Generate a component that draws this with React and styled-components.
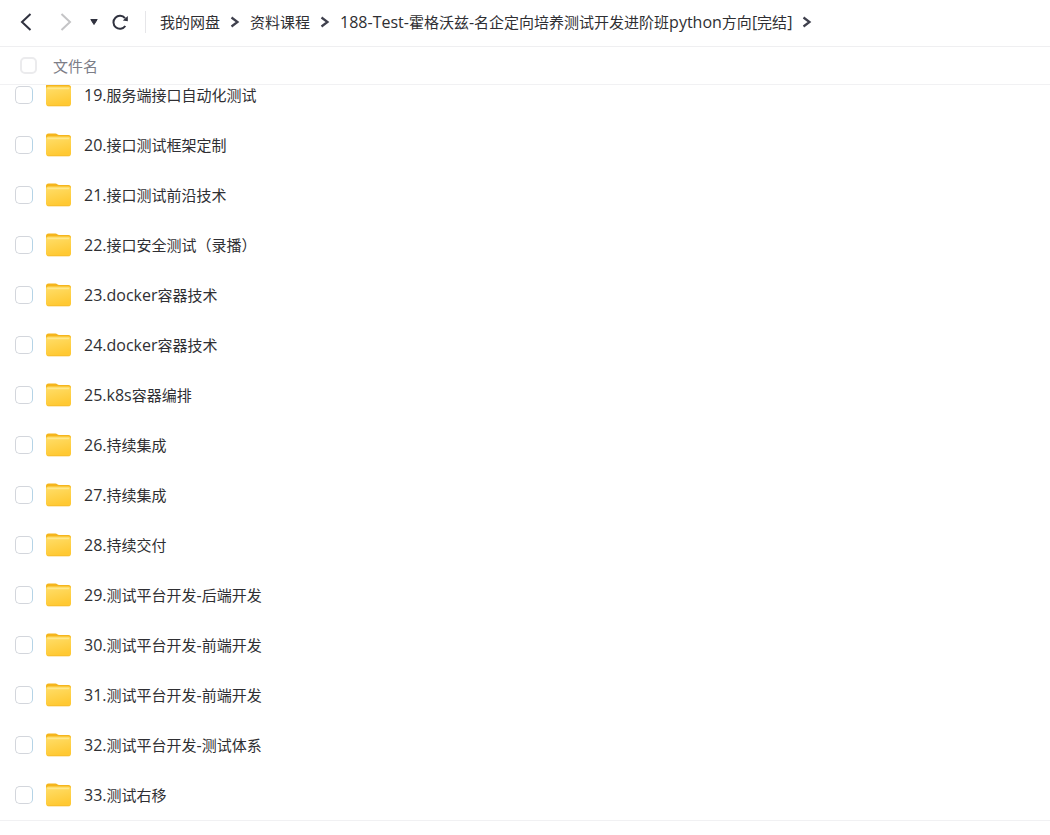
import React from "react";
import styled, { createGlobalStyle } from "styled-components";

const GlobalStyle = createGlobalStyle`
  * {
    box-sizing: border-box;
  }

  body {
    margin: 0;
    background: #fff;
    color: #2f2f33;
    font-family: "Open Sans", "Noto Sans CJK SC", sans-serif;
    font-size: 15px;
    line-height: 20px;
  }
`;

const Page = styled.div`
  display: flex;
  flex-direction: column;
  height: 100vh;
`;

const Toolbar = styled.header`
  display: flex;
  align-items: center;
  flex-shrink: 0;
  height: 47px;
  padding: 0 16px 2px;
  border-bottom: 1px solid #efeff1;
`;

const IconButton = styled.button`
  display: flex;
  align-items: center;
  justify-content: center;
  width: ${({ $width }) => $width || 20}px;
  height: 24px;
  margin-right: ${({ $gap }) => $gap || 0}px;
  padding: 0;
  border: 0;
  background: none;
  color: ${({ disabled }) => (disabled ? "#c4c4c6" : "#30323f")};
`;

const Divider = styled.div`
  width: 1px;
  height: 22px;
  margin-right: 14px;
  background: #e6e6e9;
`;

const Breadcrumb = styled.nav`
  display: flex;
  align-items: center;
  white-space: nowrap;

  a {
    color: inherit;
    text-decoration: none;
  }

  svg {
    margin: 0 10px;
  }
`;

const Latin = styled.span`
  font-size: 16px;
`;

const ColumnHeader = styled.div`
  display: flex;
  align-items: center;
  flex-shrink: 0;
  gap: 16px;
  height: 38px;
  padding: 0 20px;
  border-bottom: 1px solid #f1f1f3;
  color: #7c7d87;
`;

const Checkbox = styled.input.attrs({ type: "checkbox" })`
  appearance: none;
  flex-shrink: 0;
  width: ${({ $small }) => ($small ? 17 : 18)}px;
  height: ${({ $small }) => ($small ? 17 : 18)}px;
  margin: 0;
  border: ${({ $small }) => ($small ? "2px solid #ebebed" : "1px solid #d3d6dc")};
  border-right-color: ${({ $small }) => ($small ? "#ebebed" : "#b4d3e6")};
  border-radius: 5px;
  background: #fff;

  &:checked {
    background: #06a7ff;
  }
`;

/* The list rests at its last row, the first one runs under the column header */
const List = styled.ul`
  display: flex;
  flex: 1;
  flex-direction: column;
  justify-content: flex-end;
  min-height: 0;
  margin: 0;
  padding: 0;
  overflow: hidden;
  list-style: none;
`;

const Row = styled.li`
  display: flex;
  align-items: center;
  flex-shrink: 0;
  height: 50px;
  padding: 0 15px;

  label {
    display: flex;
    align-items: center;
  }

  svg {
    margin: 0 12px;
  }
`;

const Footer = styled.footer`
  flex-shrink: 0;
  height: 15px;
  border-top: 1px solid #f1f1f3;
`;

const folders = [
  "19.服务端接口自动化测试",
  "20.接口测试框架定制",
  "21.接口测试前沿技术",
  "22.接口安全测试（录播）",
  "23.docker容器技术",
  "24.docker容器技术",
  "25.k8s容器编排",
  "26.持续集成",
  "27.持续集成",
  "28.持续交付",
  "29.测试平台开发-后端开发",
  "30.测试平台开发-前端开发",
  "31.测试平台开发-前端开发",
  "32.测试平台开发-测试体系",
  "33.测试右移",
];

const path = [
  "我的网盘",
  "资料课程",
  "188-Test-霍格沃兹-名企定向培养测试开发进阶班python方向[完结]",
];

const MixedText = ({ text }) => (
  <span>
    {text
      .split(/([\x21-\x7e]+)/)
      .map((part, i) => (i % 2 ? <Latin key={i}>{part}</Latin> : part))}
  </span>
);

const Arrow = ({ back }) => (
  <svg width="12" height="20" viewBox="0 0 12 20" fill="none" aria-hidden="true">
    <path
      d={back ? "M10.5 2 2 10l8.500 8" : "M1.500 2 10 10l-8.500 8"}
      stroke="currentColor"
      strokeWidth="2"
    />
  </svg>
);

const Separator = () => (
  <svg width="10" height="12" viewBox="0 0 10 12" fill="none" aria-hidden="true">
    <path d="M1.500 1.500 7.500 6l-6 4.500" stroke="#3f404d" strokeWidth="2.200" />
  </svg>
);

const FolderIcon = () => (
  <svg width="27" height="26" viewBox="0 0 27 26" aria-hidden="true">
    <defs>
      <linearGradient id="front" x1="0" y1="0" x2="0.300" y2="1">
        <stop offset="0" stopColor="#ffdf6c" />
        <stop offset="1" stopColor="#ffc933" />
      </linearGradient>
    </defs>
    <path
      d="M1 4a2.500 2.500 0 0 1 2.500-2.500h7c1.500 0 2 1.500 3.500 1.500h9.500A2.500 2.500 0 0 1 26 5.500V12H1z"
      fill="#f5b51c"
    />
    <path d="M1 7.500Q1 4.500 3.500 4.500h20Q26 4.500 26 7.500v14q0 2.500-2.500 2.500h-20Q1 24 1 21.500z" fill="url(#front)" />
    <path d="M3 6.500h20.500" stroke="#ffe78c" strokeWidth="1.500" strokeLinecap="round" />
    <path d="M2 23.300q.6.500 1.500.500h20q1 0 1.600-.5" stroke="#f7bd2c" fill="none" />
  </svg>
);

const App = () => {
  return (
    <Page>
      <GlobalStyle />
      <Toolbar>
        <IconButton aria-label="后退" $gap={20}>
          <Arrow back />
        </IconButton>
        <IconButton aria-label="前进" $gap={10} disabled>
          <Arrow />
        </IconButton>
        <IconButton aria-label="历史" $width={16} $gap={8}>
          <svg width="8" height="8" viewBox="0 0 8 8" aria-hidden="true">
            <path d="M.8 1.500h6.400L4 6.500z" fill="currentColor" stroke="currentColor" strokeLinejoin="round" />
          </svg>
        </IconButton>
        <IconButton aria-label="刷新" $gap={15}>
          <svg width="18" height="18" viewBox="0 0 18 18" fill="none" aria-hidden="true">
            <path d="M14 5.200A6.500 6.500 0 1 0 14.300 13" stroke="currentColor" strokeWidth="2" />
            <path d="M16.800 3v5.200l-5-.8z" fill="currentColor" />
          </svg>
        </IconButton>
        <Divider />
        <Breadcrumb>
          {path.map((item) => (
            <React.Fragment key={item}>
              <a href="#">
                <MixedText text={item} />
              </a>
              <Separator />
            </React.Fragment>
          ))}
        </Breadcrumb>
      </Toolbar>
      <ColumnHeader>
        <Checkbox $small id="all" />
        <label htmlFor="all">文件名</label>
      </ColumnHeader>
      <List>
        {folders.map((name) => (
          <Row key={name}>
            <Checkbox id={name} />
            <label htmlFor={name}>
              <FolderIcon />
              <MixedText text={name} />
            </label>
          </Row>
        ))}
      </List>
      <Footer />
    </Page>
  );
};

export default App;
